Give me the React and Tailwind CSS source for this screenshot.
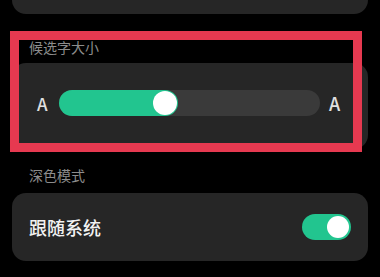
import React from "react";

const Etiqueta = ({ children, className }) => (
    <div className={"pl-[17px] text-[14px] leading-[24px] text-[#8c8c8c] " + className}>
        {children}
    </div>
);

const App = () => {
    const progreso = 119; // ancho del relleno verde en px

    return (
        <div
            className="relative w-[380px] h-[277px] bg-black overflow-hidden"
            style={{ fontFamily: '"Noto Sans CJK SC", "Noto Sans", sans-serif' }}
        >
            <div className="px-3">
                {/* tarjeta de arriba, cortada */}
                <div className="h-[14px] rounded-b-[14px] bg-[#262626]" />

                <Etiqueta className="mt-[21px]">候选字大小</Etiqueta>

                <div className="mt-[4px] h-[86px] rounded-[14px] bg-[#262626] px-[25px] pt-[27px]">
                    <div className="flex items-center gap-[9px] h-[26px]">
                        <span className="w-[13px] text-[17px] font-medium text-[#e0e0e0] leading-none">A</span>
                        <div className="relative flex-1 h-[26px] rounded-full bg-[#3a3a3a]">
                            <div
                                className="relative h-[26px] rounded-full bg-[#22c58f]"
                                style={{ width: progreso }}
                            >
                                <div className="absolute right-[1px] top-[1px] w-[24px] h-[24px] rounded-full bg-white" />
                            </div>
                        </div>
                        <span className="w-[14px] text-[18px] font-medium text-[#e0e0e0] leading-none">A</span>
                    </div>
                </div>

                <Etiqueta className="mt-[14px]">深色模式</Etiqueta>

                <div className="mt-[6px] h-[68px] rounded-[14px] bg-[#262626] flex items-center justify-between pl-[17px] pr-[17px]">
                    <span className="text-[18px] font-medium text-[#f2f2f2]">跟随系统</span>
                    <div className="relative w-[49px] h-[26px] rounded-full bg-[#22c58f]">
                        <div className="absolute right-[2px] top-[2px] w-[22px] h-[22px] rounded-full bg-white" />
                    </div>
                </div>
            </div>

            {/* marco rojo encima */}
            <div className="absolute left-[10px] top-[31px] w-[352px] h-[121px] border-[9px] border-[#e63950]" />
        </div>
    );
};

export default App;
